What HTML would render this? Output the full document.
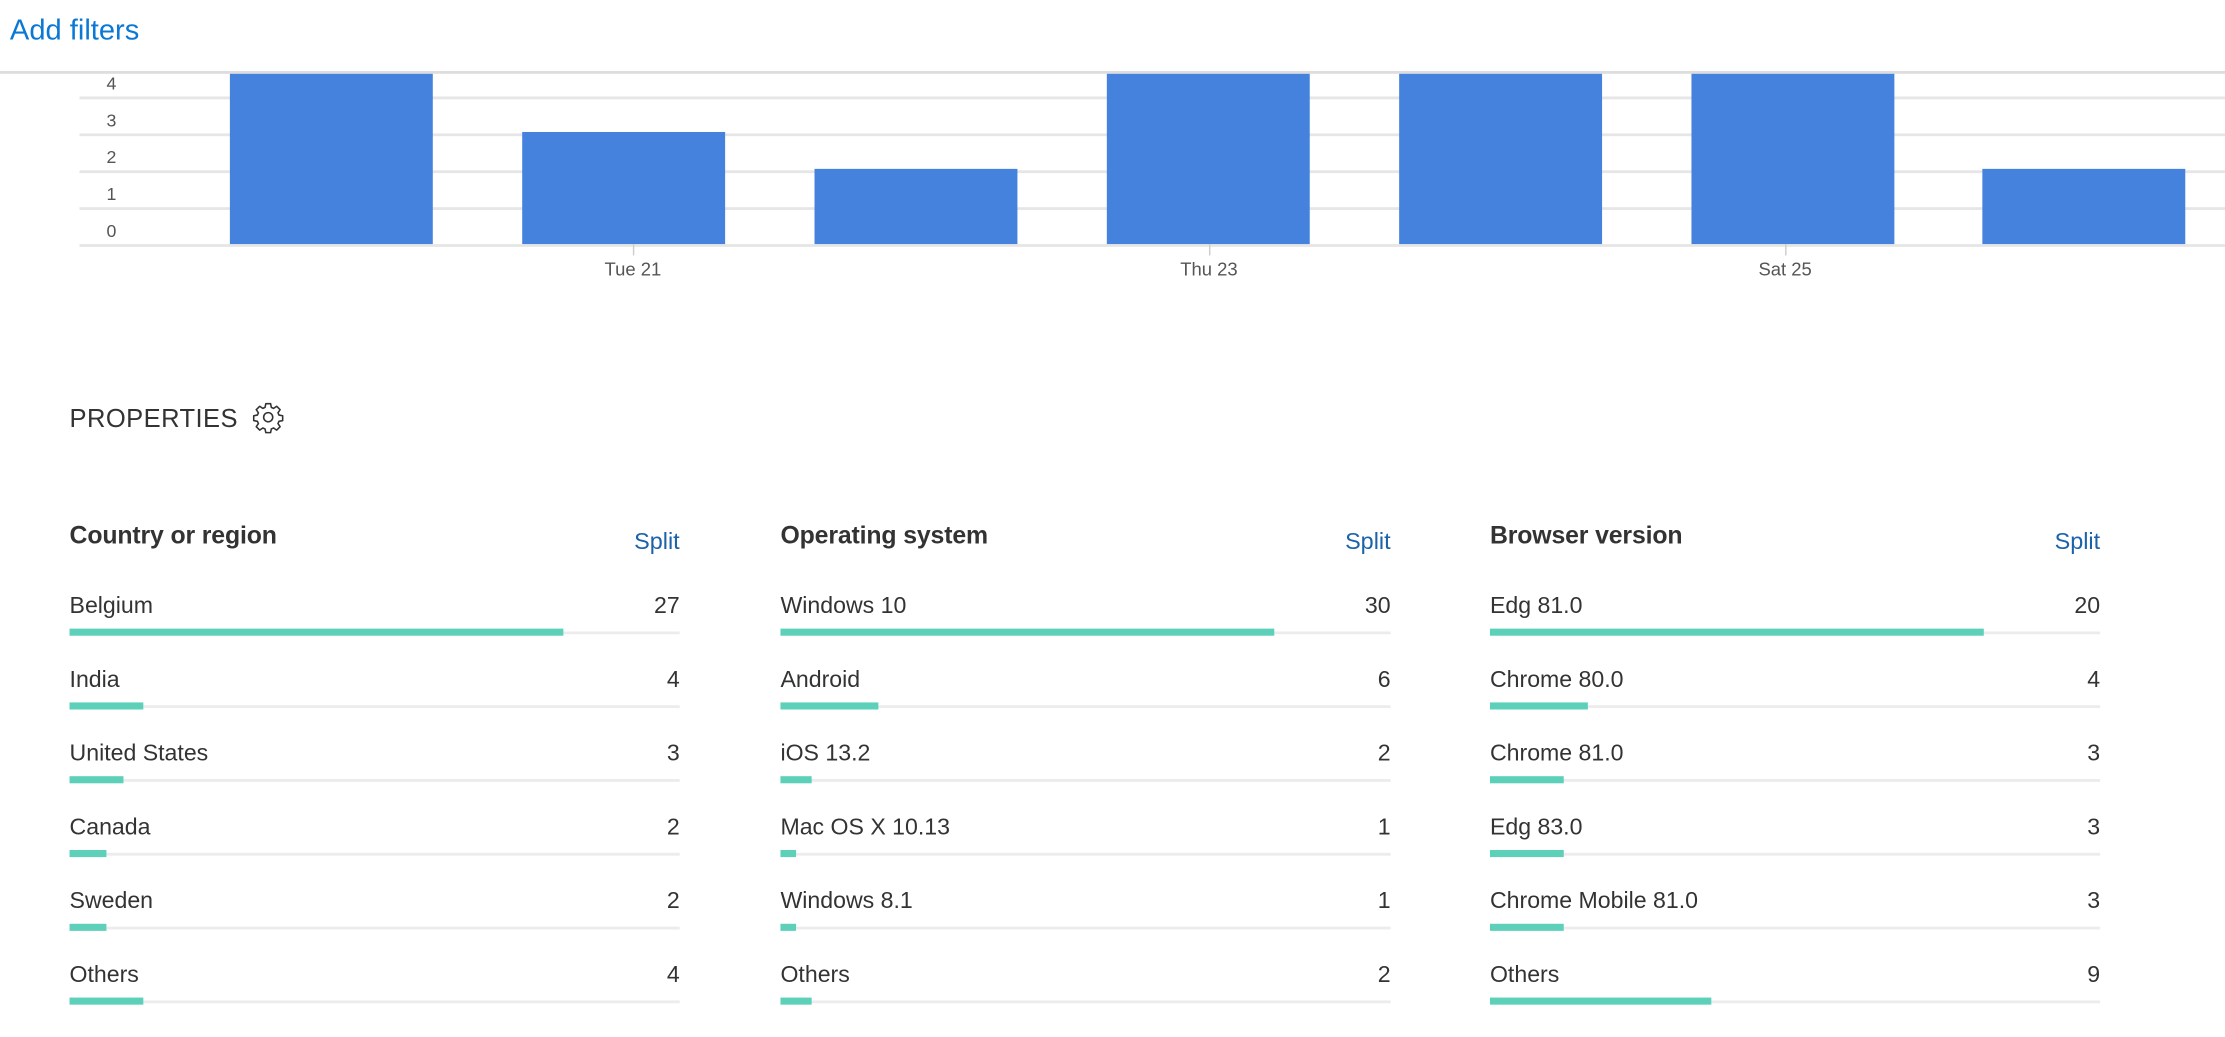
<!DOCTYPE html>
<html><head><meta charset="utf-8"><style>
html,body{margin:0;padding:0;background:#fff;overflow:hidden;width:2225px;height:1037px}
#w{position:absolute;left:0;top:0;width:1568px;height:731px;transform:scale(1.41901);transform-origin:0 0;font-family:"Liberation Sans",sans-serif;color:#333}
.a{position:absolute}
.g{position:absolute;left:56px;right:0;height:1.5px;background:#e6e6e6}
.yl{position:absolute;left:60px;width:22px;text-align:right;font-size:12.5px;color:#555;line-height:14px}
.bar{position:absolute;background:#4582dd;width:143px}
.xl{position:absolute;width:80px;text-align:center;font-size:13px;color:#555;top:182px}
.tick{position:absolute;top:172px;width:1px;height:8px;background:#ccc}
.col{position:absolute;top:0;width:430px}
.h{position:absolute;left:0;top:366px;font-size:17.5px;font-weight:bold;color:#333;line-height:22px;letter-spacing:-0.1px}
.sp{position:absolute;right:0;top:372px;font-size:16.5px;color:#1a62aa;line-height:20px}
.l{position:absolute;left:0;font-size:16.3px;line-height:20px;color:#333}
.v{position:absolute;right:0;font-size:16.3px;line-height:20px;color:#333}
.tr{position:absolute;left:0;width:430px;height:1.5px;background:#ececec}
.b{position:absolute;left:0;height:5px;background:#5dd0b9}
</style></head><body><div id="w">
<div class="a" style="left:7px;top:9px;font-size:20.5px;color:#0a78d4;line-height:26px">Add filters</div>
<div class="a" style="left:0;right:0;top:50px;height:1.5px;background:#ddd"></div>
<div class="g" style="top:68px"></div><div class="g" style="top:94px"></div><div class="g" style="top:120px"></div><div class="g" style="top:146px"></div><div class="g" style="top:172px"></div>
<div class="yl" style="top:52px">4</div><div class="yl" style="top:78px">3</div><div class="yl" style="top:104px">2</div><div class="yl" style="top:130px">1</div><div class="yl" style="top:156px">0</div>
<div class="bar" style="left:162px;top:52px;height:120px"></div>
<div class="bar" style="left:368px;top:93px;height:79px"></div>
<div class="bar" style="left:574px;top:119px;height:53px"></div>
<div class="bar" style="left:780px;top:52px;height:120px"></div>
<div class="bar" style="left:986px;top:52px;height:120px"></div>
<div class="bar" style="left:1192px;top:52px;height:120px"></div>
<div class="bar" style="left:1397px;top:119px;height:53px"></div>
<div class="tick" style="left:446px"></div><div class="tick" style="left:852px"></div><div class="tick" style="left:1258px"></div>
<div class="xl" style="left:406px">Tue 21</div><div class="xl" style="left:812px">Thu 23</div><div class="xl" style="left:1218px">Sat 25</div>
<div class="a" style="left:49px;top:284px;font-size:18px;line-height:22px;color:#333;letter-spacing:0.3px">PROPERTIES</div>
<svg class="a" style="left:177px;top:282px" width="24" height="24" viewBox="0 0 24 24" fill="none" stroke="#333" stroke-width="1.1" stroke-linejoin="round"><path d="M10.3 2.5h3.4l.5 2.6 1.6.7 2.2-1.5 2.4 2.4-1.5 2.2.7 1.6 2.6.5v3.4l-2.6.5-.7 1.6 1.5 2.2-2.4 2.4-2.200-1.5-1.6.7-.5 2.6h-3.4l-.5-2.6-1.6-.7-2.2 1.5-2.4-2.4 1.5-2.2-.7-1.6-2.6-.5v-3.4l2.6-.5.7-1.6-1.5-2.2 2.4-2.4 2.2 1.5 1.6-.7z"/><circle cx="12" cy="12" r="3.2"/></svg>

<div class="col" style="left:49px">
<div class="h">Country or region</div><div class="sp">Split</div>
<div class="l" style="top:417px">Belgium</div><div class="v" style="top:417px">27</div><div class="tr" style="top:445px"></div><div class="b" style="top:443px;width:348px"></div>
<div class="l" style="top:469px">India</div><div class="v" style="top:469px">4</div><div class="tr" style="top:497px"></div><div class="b" style="top:495px;width:52px"></div>
<div class="l" style="top:521px">United States</div><div class="v" style="top:521px">3</div><div class="tr" style="top:549px"></div><div class="b" style="top:547px;width:38px"></div>
<div class="l" style="top:573px">Canada</div><div class="v" style="top:573px">2</div><div class="tr" style="top:601px"></div><div class="b" style="top:599px;width:26px"></div>
<div class="l" style="top:625px">Sweden</div><div class="v" style="top:625px">2</div><div class="tr" style="top:653px"></div><div class="b" style="top:651px;width:26px"></div>
<div class="l" style="top:677px">Others</div><div class="v" style="top:677px">4</div><div class="tr" style="top:705px"></div><div class="b" style="top:703px;width:52px"></div>
</div>

<div class="col" style="left:550px">
<div class="h">Operating system</div><div class="sp">Split</div>
<div class="l" style="top:417px">Windows 10</div><div class="v" style="top:417px">30</div><div class="tr" style="top:445px"></div><div class="b" style="top:443px;width:348px"></div>
<div class="l" style="top:469px">Android</div><div class="v" style="top:469px">6</div><div class="tr" style="top:497px"></div><div class="b" style="top:495px;width:69px"></div>
<div class="l" style="top:521px">iOS 13.2</div><div class="v" style="top:521px">2</div><div class="tr" style="top:549px"></div><div class="b" style="top:547px;width:22px"></div>
<div class="l" style="top:573px">Mac OS X 10.13</div><div class="v" style="top:573px">1</div><div class="tr" style="top:601px"></div><div class="b" style="top:599px;width:11px"></div>
<div class="l" style="top:625px">Windows 8.1</div><div class="v" style="top:625px">1</div><div class="tr" style="top:653px"></div><div class="b" style="top:651px;width:11px"></div>
<div class="l" style="top:677px">Others</div><div class="v" style="top:677px">2</div><div class="tr" style="top:705px"></div><div class="b" style="top:703px;width:22px"></div>
</div>

<div class="col" style="left:1050px">
<div class="h">Browser version</div><div class="sp">Split</div>
<div class="l" style="top:417px">Edg 81.0</div><div class="v" style="top:417px">20</div><div class="tr" style="top:445px"></div><div class="b" style="top:443px;width:348px"></div>
<div class="l" style="top:469px">Chrome 80.0</div><div class="v" style="top:469px">4</div><div class="tr" style="top:497px"></div><div class="b" style="top:495px;width:69px"></div>
<div class="l" style="top:521px">Chrome 81.0</div><div class="v" style="top:521px">3</div><div class="tr" style="top:549px"></div><div class="b" style="top:547px;width:52px"></div>
<div class="l" style="top:573px">Edg 83.0</div><div class="v" style="top:573px">3</div><div class="tr" style="top:601px"></div><div class="b" style="top:599px;width:52px"></div>
<div class="l" style="top:625px">Chrome Mobile 81.0</div><div class="v" style="top:625px">3</div><div class="tr" style="top:653px"></div><div class="b" style="top:651px;width:52px"></div>
<div class="l" style="top:677px">Others</div><div class="v" style="top:677px">9</div><div class="tr" style="top:705px"></div><div class="b" style="top:703px;width:156px"></div>
</div>
</div></body></html>
